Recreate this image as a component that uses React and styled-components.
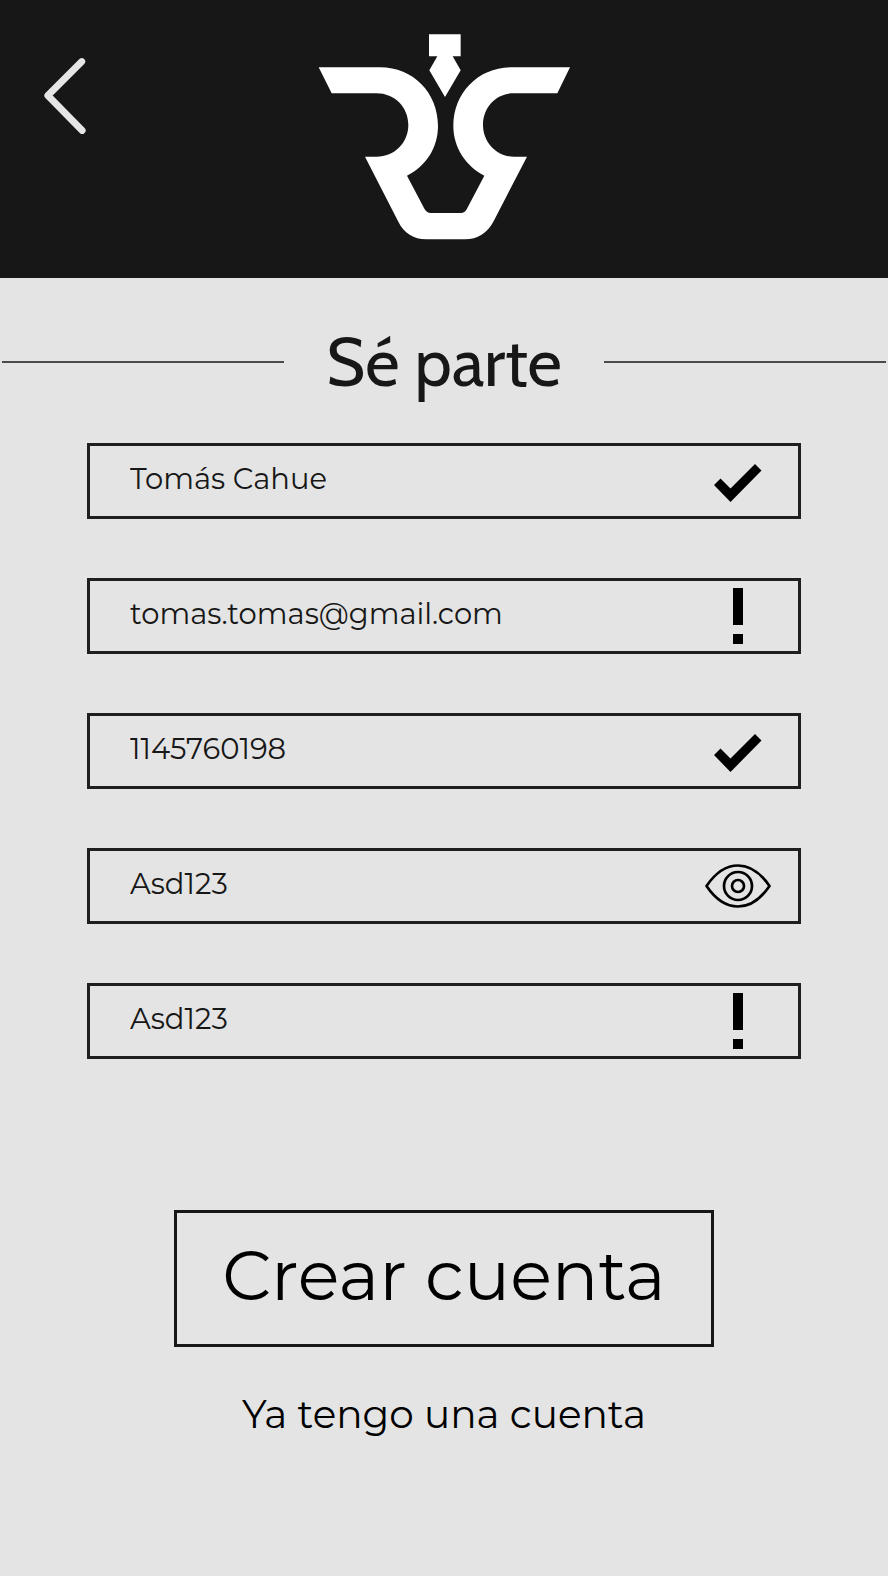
import React, { useState } from "react";
import styled, { createGlobalStyle } from "styled-components";

const ink = "#171717";
const paper = "#e4e4e4";

const GlobalStyle = createGlobalStyle`
  *, *::before, *::after { box-sizing: border-box; }
  body {
    margin: 0;
    background: ${paper};
    color: ${ink};
    font-family: Montserrat, Inter, "Liberation Sans", sans-serif;
    font-weight: 400;
  }
`;

const Page = styled.div`
  min-height: 100vh;
  display: flex;
  flex-direction: column;
`;

const Header = styled.header`
  display: grid;
  grid-template-columns: 1fr auto 1fr;
  align-items: start;
  height: 278px;
  padding: 34px 43px 0;
  background: ${ink};
`;

const BackButton = styled.button`
  justify-self: start;
  display: flex;
  margin-top: 23px;
  padding: 0;
  border: 0;
  background: none;
  cursor: pointer;
`;

const Logo = styled.svg`
  display: block;
  width: 252px;
  height: 206px;
  fill: #fff;
`;

const TitleRow = styled.div`
  display: flex;
  align-items: center;
  gap: 42px;
  margin-top: 44px;
  padding: 0 2px;
`;

const Rule = styled.span`
  flex: 1;
  height: 2px;
  background: #4a4a4a;
`;

const Title = styled.h1`
  margin: 0;
  font-family: Cabin, Lato, "Open Sans", sans-serif;
  font-size: 67px;
  line-height: 80px;
  font-weight: 400;
`;

const Form = styled.form`
  display: flex;
  flex-direction: column;
  margin-top: 41px;
  padding: 0 87px;
`;

const Fields = styled.div`
  display: flex;
  flex-direction: column;
  gap: 59px;
`;

const Field = styled.div`
  display: flex;
  align-items: center;
  height: 76px;
  padding-right: 26px;
  border: 3px solid #1f1f1f;
`;

const Input = styled.input`
  flex: 1;
  min-width: 0;
  height: 100%;
  padding: 0 0 5px 40px;
  border: 0;
  outline: 0;
  background: transparent;
  color: ${ink};
  font: inherit;
  font-size: 29px;
`;

const Status = styled.span`
  display: flex;
  justify-content: center;
  width: 68px;
`;

const RevealButton = styled.button`
  display: flex;
  justify-content: center;
  width: 68px;
  padding: 0;
  border: 0;
  background: none;
  color: #000;
  cursor: pointer;
`;

const SubmitButton = styled.button`
  align-self: center;
  width: 100%;
  max-width: 540px;
  height: 137px;
  margin-top: 151px;
  padding: 0 0 8px;
  border: 3px solid ${ink};
  background: none;
  color: #000;
  font: inherit;
  font-size: 69px;
  cursor: pointer;
`;

const LoginLink = styled.a`
  align-self: center;
  margin-top: 41px;
  color: #000;
  font-size: 39px;
  line-height: 52px;
  text-decoration: none;
`;

const Check = () => (
  <svg width="48" height="42" viewBox="0 0 48 42" aria-label="Correcto" role="img">
    <path d="M0 25 L6.500 18.500 L16.500 28.500 L41 4 L47.500 10.500 L16.500 42 Z" />
  </svg>
);

const Alert = () => (
  <svg width="10" height="56" viewBox="0 0 10 56" aria-label="Revisar" role="img">
    <path d="M0 0H10V37H0Z M0 46H10V56H0Z" />
  </svg>
);

const Eye = () => (
  <svg width="66" height="44" viewBox="0 0 66 44" fill="none" stroke="currentColor" strokeWidth="2.700" aria-hidden="true">
    <path d="M1.500 22 C11 8 21 1.500 33 1.500 C45 1.500 55 8 64.500 22 C55 36 45 42.500 33 42.500 C21 42.500 11 36 1.500 22 Z" strokeLinejoin="round" />
    <circle cx="33" cy="22" r="14" />
    <circle cx="33" cy="22" r="6" />
  </svg>
);

const FIELDS = [
  { name: "nombre", label: "Nombre", type: "text", value: "Tomás Cahue", status: "ok" },
  { name: "email", label: "Correo electrónico", type: "email", value: "tomas.tomas@gmail.com", status: "alert" },
  { name: "telefono", label: "Teléfono", type: "tel", value: "1145760198", status: "ok" },
  { name: "clave", label: "Contraseña", value: "Asd123", status: "reveal" },
  { name: "repetir", label: "Repetir contraseña", value: "Asd123", status: "alert" },
];

export default function App() {
  const [visible, setVisible] = useState(true);

  return (
    <Page>
      <GlobalStyle />
      <Header>
        <BackButton type="button" aria-label="Volver">
          <svg width="43" height="78" viewBox="0 0 43 78" fill="none" stroke="#e6e6e6" strokeWidth="6.800" strokeLinecap="round" strokeLinejoin="round">
            <path d="M38.800 4.500 L4.800 38.500 L39.200 73.500" />
          </svg>
        </BackButton>
        <Logo viewBox="54 41 756 618" role="img" aria-label="RS">
          <path d="M387 42H482V108H458L482 150L435 230L388 150L412 108H387Z" />
          <path d="M56 141H240C340 141 414 218 414 317C414 382 378 438 321 466L372 563Q379 578 393 578H482Q496 578 502 563L553 466C498 438 460 382 460 317C460 218 535 141 634 141H810L772 219H640C588 219 549 262 549 314C549 366 590 409 642 409H681L580 604C562 637 532 657 496 657H378C342 657 311 637 295 604L195 409H230C283 409 325 368 325 314C325 260 283 219 230 219H95Z" />
        </Logo>
      </Header>

      <main>
        <TitleRow>
          <Rule />
          <Title>Sé parte</Title>
          <Rule />
        </TitleRow>

        <Form onSubmit={(e) => e.preventDefault()}>
          <Fields>
            {FIELDS.map(({ name, label, type, value, status }) => (
              <Field key={name}>
                <Input
                  name={name}
                  aria-label={label}
                  type={type || (visible ? "text" : "password")}
                  defaultValue={value}
                />
                {status === "reveal" ? (
                  <RevealButton type="button" aria-label="Mostrar contraseña" onClick={() => setVisible(!visible)}>
                    <Eye />
                  </RevealButton>
                ) : (
                  <Status>{status === "ok" ? <Check /> : <Alert />}</Status>
                )}
              </Field>
            ))}
          </Fields>
          <SubmitButton type="submit">Crear cuenta</SubmitButton>
          <LoginLink href="#ingresar">Ya tengo una cuenta</LoginLink>
        </Form>
      </main>
    </Page>
  );
}
